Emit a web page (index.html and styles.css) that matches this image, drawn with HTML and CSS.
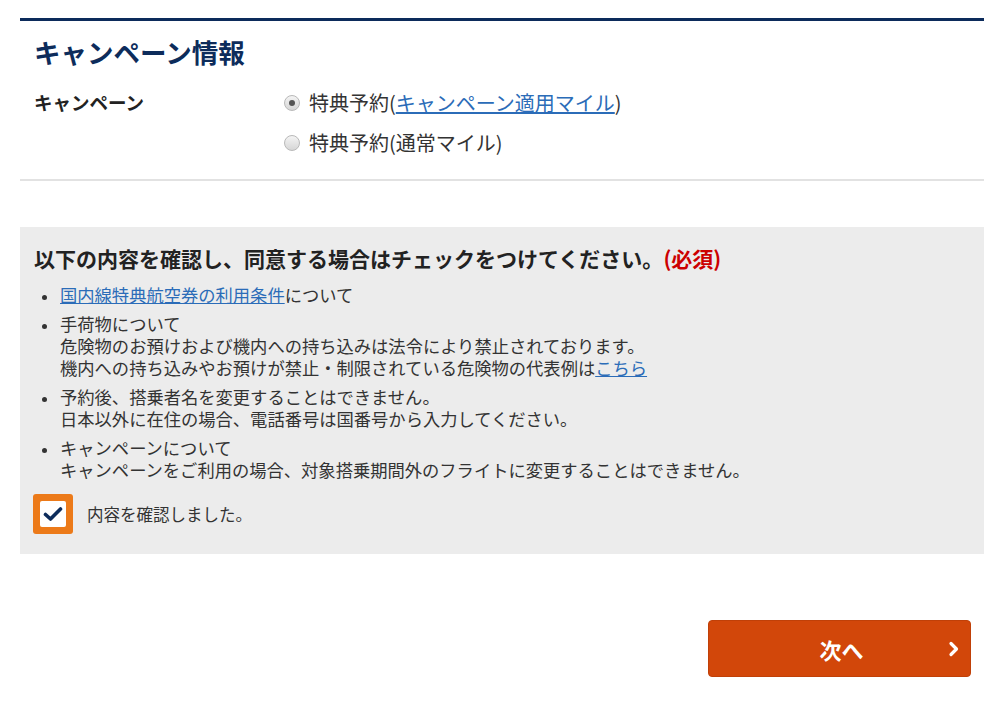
FILE: index.html
```html
<!DOCTYPE html>
<html lang="ja">
<head>
<meta charset="utf-8">
<title>キャンペーン情報</title>
<link rel="stylesheet" href="styles.css">
</head>
<body>
<div class="page">
  <section class="campaign">
    <h2 class="campaign-title">キャンペーン情報</h2>
    <div class="field-row">
      <div class="field-label">キャンペーン</div>
      <div class="field-options">
        <label class="radio-row"><span class="radio radio-on"></span><span>特典予約(<a href="#" class="link">キャンペーン適用マイル</a>)</span></label>
        <label class="radio-row"><span class="radio"></span><span>特典予約(通常マイル)</span></label>
      </div>
    </div>
  </section>

  <section class="consent">
    <h3 class="consent-title">以下の内容を確認し、同意する場合はチェックをつけてください。<span class="required">(必須)</span></h3>
    <ul class="consent-list">
      <li><a href="#" class="link">国内線特典航空券の利用条件</a>について</li>
      <li>手荷物について<br>危険物のお預けおよび機内への持ち込みは法令により禁止されております。<br>機内への持ち込みやお預けが禁止・制限されている危険物の代表例は<a href="#" class="link">こちら</a></li>
      <li>予約後、搭乗者名を変更することはできません。<br>日本以外に在住の場合、電話番号は国番号から入力してください。</li>
      <li>キャンペーンについて<br>キャンペーンをご利用の場合、対象搭乗期間外のフライトに変更することはできません。</li>
    </ul>
    <label class="check-row">
      <span class="checkbox"><span class="checkbox-inner"><svg width="20" height="16" viewBox="0 0 20 16"><path d="M2.5 8.5 L7.5 13 L17.5 3" fill="none" stroke="#0d2c5b" stroke-width="3.6" stroke-linecap="round" stroke-linejoin="round"/></svg></span></span>
      <span class="check-text">内容を確認しました。</span>
    </label>
  </section>

  <div class="actions">
    <button class="next-btn" type="button"><span class="next-label">次へ</span><svg class="chev" width="12" height="16" viewBox="0 0 12 16"><path d="M3 2.5 L8.5 8 L3 13.5" fill="none" stroke="#fff" stroke-width="3.2" stroke-linecap="round" stroke-linejoin="round"/></svg></button>
  </div>
</div>
</body>
</html>
```

FILE: styles.css
```css
html, body {
  margin: 0;
  padding: 0;
  background: #fff;
}
body {
  font-family: "Noto Sans CJK JP", "Noto Sans", sans-serif;
  color: #333;
}
.page {
  width: 964px;
  margin: 0 0 0 20px;
  padding-top: 18px;
}
.campaign {
  border-top: 3px solid #0c2b5b;
  border-bottom: 2px solid #e2e2e2;
  padding: 14px 14px 22px;
}
.campaign-title {
  margin: 0;
  font-size: 26.5px;
  line-height: 34px;
  font-weight: 700;
  color: #0d2c5b;
}
.field-row {
  display: flex;
  margin-top: 20px;
}
.field-label {
  width: 250px;
  font-size: 18.5px;
  line-height: 26px;
  font-weight: 700;
  color: #222;
}
.field-options {
  display: flex;
  flex-direction: column;
  gap: 12px;
}
.radio-row {
  display: flex;
  align-items: center;
  font-size: 20px;
  line-height: 28px;
  color: #333;
}
.radio {
  width: 14px;
  height: 14px;
  border-radius: 50%;
  border: 1px solid #b9b9b9;
  background: linear-gradient(#f4f4f4, #d6d6d6);
  margin-right: 9px;
  display: flex;
  align-items: center;
  justify-content: center;
  box-sizing: content-box;
}
.radio-on::after {
  content: "";
  width: 6px;
  height: 6px;
  border-radius: 50%;
  background: #555;
}
.link {
  color: #2b6cb8;
  text-decoration: underline;
}
.consent {
  margin-top: 46px;
  background: #ececec;
  padding: 16px 14px 20px;
}
.consent-title {
  margin: 0;
  font-size: 21px;
  line-height: 30px;
  font-weight: 700;
  color: #222;
}
.required {
  color: #cc0000;
}
.consent-list {
  list-style: none;
  margin: 11px 0 0;
  padding: 0 0 0 26px;
  font-size: 17.3px;
  line-height: 22px;
  color: #333;
}
.consent-list li {
  margin-bottom: 7px;
}
.consent-list li::before {
  content: "";
  display: inline-block;
  width: 5px;
  height: 5px;
  border-radius: 50%;
  background: #333;
  margin-left: -18px;
  margin-right: 13px;
  vertical-align: middle;
}
.check-row {
  display: flex;
  align-items: center;
  margin-top: 13px;
}
.checkbox {
  width: 40px;
  height: 40px;
  background: #ec7a19;
  border-radius: 3px;
  display: flex;
  align-items: center;
  justify-content: center;
  margin-left: -1px;
}
.checkbox-inner {
  width: 26px;
  height: 26px;
  background: #fff;
  border-radius: 2px;
  display: flex;
  align-items: center;
  justify-content: center;
}
.check-text {
  margin-left: 14px;
  font-size: 16.5px;
  line-height: 22px;
  color: #333;
}
.actions {
  display: flex;
  justify-content: flex-end;
  padding: 66px 13px 0 0;
}
.next-btn {
  width: 263px;
  height: 57px;
  background: #d2470a;
  border: 1px solid #c04008;
  border-radius: 4px;
  color: #fff;
  font-family: "Noto Sans CJK JP", "Noto Sans", sans-serif;
  font-size: 22px;
  font-weight: 700;
  display: flex;
  align-items: center;
  padding: 0 10px 0 0;
  box-sizing: border-box;
  cursor: pointer;
}
.next-label {
  flex: 1;
  text-align: center;
  padding-left: 26px;
}
.chev {
  display: block;
}
```
